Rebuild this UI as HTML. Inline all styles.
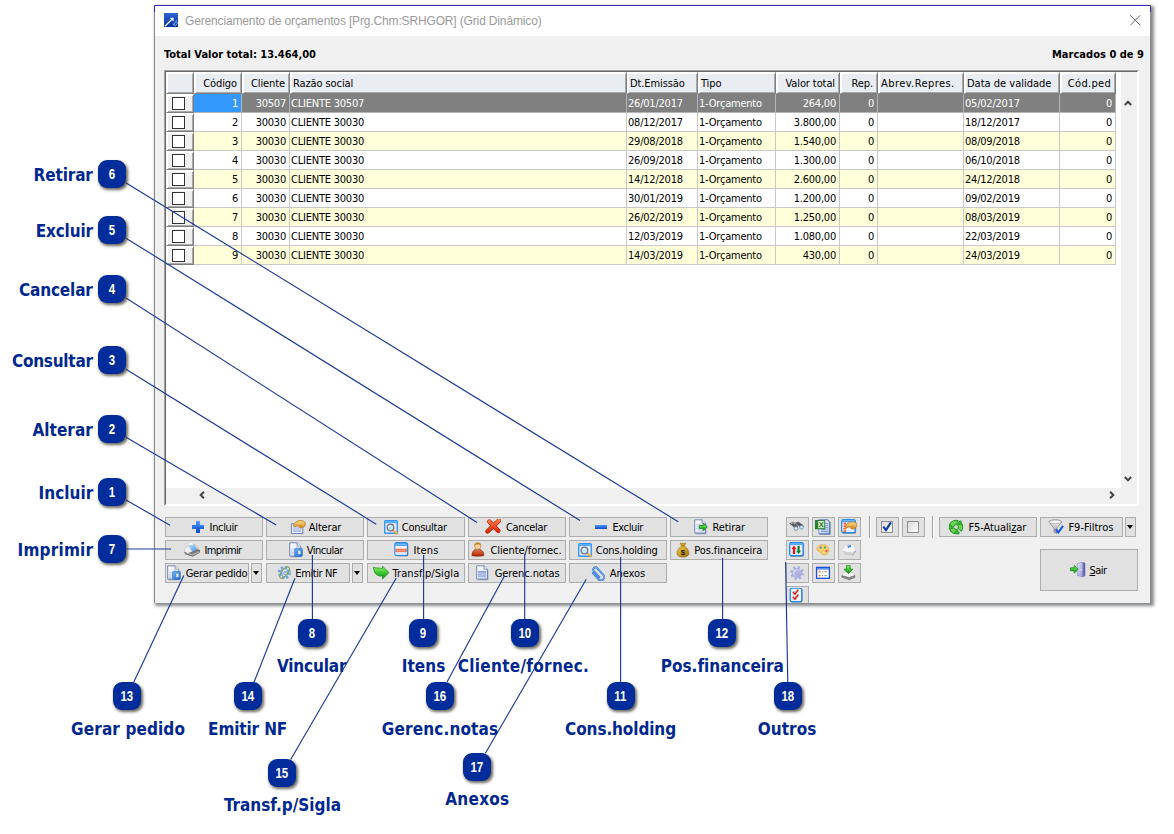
<!DOCTYPE html>
<html lang="pt-BR"><head><meta charset="utf-8"><title>Gerenciamento de orçamentos</title>
<style>
*{box-sizing:border-box}
html,body{margin:0;padding:0}
body{width:1174px;height:834px;position:relative;background:#fff;overflow:hidden;font:11px 'DejaVu Sans Condensed','Liberation Sans',sans-serif;color:#000}
.abs{position:absolute}
#win{position:absolute;left:154px;top:5px;width:997px;height:598px;background:#f0f0f0;border-top:1px solid #3328bc;border-left:1px solid #86888c;border-right:1px solid #86888c;box-shadow:2px 2px 3px 1px rgba(40,45,50,.55)}
#tbar{position:absolute;left:0;top:0;width:995px;height:30px;background:#fff}
#title{position:absolute;left:30px;top:7px;font:12px 'Liberation Sans',sans-serif;color:#9a9a9a;white-space:pre;line-height:16px}
.b11{font:bold 11px 'DejaVu Sans Condensed','Liberation Sans',sans-serif;white-space:pre;position:absolute;line-height:14px}
#grid{position:absolute;left:164px;top:70px;width:975px;height:436px;background:#fff;border:1px solid;border-color:#a0a0a0 #fff #fff #a0a0a0}
#gin{position:absolute;left:0;top:0;width:973px;height:434px;border:1px solid;border-color:#696969 #fff #fff #696969;overflow:hidden}
.hc{position:absolute;top:0;height:22px;background:#e9edf1;border:1px solid;border-color:#fff #7e7e7e #7e7e7e #fff;box-shadow:inset 1px 1px 0 #fff,inset -1px -1px 0 #a9a9a9;line-height:19px;white-space:pre;padding:1px 3px 0 2px;overflow:hidden;letter-spacing:-0.1px}
.hc.r{text-align:right;padding-right:4px}
.c{position:absolute;height:19px;line-height:20px;white-space:pre;padding:0 2px 0 1px;border-right:1px solid #c8c8c8;border-bottom:1px solid #c8c8c8;overflow:hidden}
.c.r{text-align:right;padding-right:3px}
.c.sel{background:#808080;color:#fff;border-color:#b4b4b4}
.c.cur{background:#3399ff;color:#fff}
.c.y{background:#ffffd9}
.cb{position:absolute;left:0;width:28px;height:19px;background:#f0f0f0;border:1px solid;border-color:#fff #7e7e7e #7e7e7e #fff;box-shadow:inset 1px 1px 0 #fff,inset -1px -1px 0 #a9a9a9}
.cb i{position:absolute;left:5px;top:2px;width:13px;height:13px;background:#fff;border:1px solid #333}
.sb{position:absolute;background:#f0f0f0}
.btn{position:absolute;height:20px;background:#e1e1e1;border:1px solid #adadad;display:flex;align-items:center;justify-content:center;white-space:pre;line-height:18px}
.btn svg{flex:none;display:block;position:absolute}
.btn span{display:block;position:absolute;line-height:18px}
.dd{position:absolute;width:11px;height:20px;background:#e1e1e1;border:1px solid #adadad}
.dd:after{content:"";position:absolute;left:1px;top:7px;border:3.5px solid transparent;border-top:4px solid #000;border-bottom:0}
.sep{position:absolute;width:2px;height:22px;border-left:1px solid #a0a0a0;border-right:1px solid #fff}
.badge{position:absolute;width:28px;height:28px;border-radius:9px;background:#002c9c;box-shadow:1.5px 2px 3px rgba(60,55,40,.75);color:#fff;font:bold 14px 'Liberation Sans',sans-serif;line-height:28px;text-align:center}
.badge span{display:inline-block;transform:scaleX(.82);transform-origin:50% 50%}
.lbl{position:absolute;font:bold 17px 'DejaVu Sans Condensed','Liberation Sans',sans-serif;color:#00288f;white-space:pre;line-height:22px}
u{text-decoration:underline;text-underline-offset:1px}
</style></head><body>

<svg width="0" height="0" style="position:absolute;left:0;top:0"><defs>
<linearGradient id="gBlue" x1="0" y1="0" x2="0" y2="1"><stop offset="0" stop-color="#4a98f8"/><stop offset="1" stop-color="#0a48c8"/></linearGradient>
<linearGradient id="gRed" x1="0" y1="0" x2="0" y2="1"><stop offset="0" stop-color="#ff7a4a"/><stop offset="1" stop-color="#d42a0a"/></linearGradient>
<linearGradient id="gGreen" x1="0" y1="0" x2="0" y2="1"><stop offset="0" stop-color="#7be452"/><stop offset="1" stop-color="#189a1c"/></linearGradient>
<linearGradient id="gPage" x1="0" y1="0" x2="1" y2="1"><stop offset="0" stop-color="#ffffff"/><stop offset="1" stop-color="#cfdcf2"/></linearGradient>
<linearGradient id="gGray" x1="0" y1="0" x2="0" y2="1"><stop offset="0" stop-color="#fafafa"/><stop offset="1" stop-color="#9c9c9c"/></linearGradient>
<linearGradient id="gGold" x1="0" y1="0" x2="1" y2="1"><stop offset="0" stop-color="#f6d24a"/><stop offset="1" stop-color="#a06c06"/></linearGradient>
<linearGradient id="gBody" x1="0" y1="0" x2="0" y2="1"><stop offset="0" stop-color="#f4743a"/><stop offset="1" stop-color="#a8260c"/></linearGradient>
<linearGradient id="gDoor" x1="0" y1="0" x2="1" y2="0"><stop offset="0" stop-color="#d6d6f6"/><stop offset="1" stop-color="#6a6ab8"/></linearGradient>
<linearGradient id="gApp" x1="0" y1="0" x2="0" y2="1"><stop offset="0" stop-color="#2f63d6"/><stop offset="1" stop-color="#06349a"/></linearGradient>
<linearGradient id="gBox" x1="0" y1="0" x2="1" y2="1"><stop offset="0" stop-color="#d8d8d8"/><stop offset="1" stop-color="#ffffff"/></linearGradient>
<linearGradient id="gWin" x1="0" y1="0" x2="0" y2="1"><stop offset="0" stop-color="#ffffff"/><stop offset="1" stop-color="#b9c9ea"/></linearGradient>
<linearGradient id="gPaper" x1="0" y1="0" x2="1" y2="1"><stop offset="0" stop-color="#b4dcff"/><stop offset="1" stop-color="#3d96ee"/></linearGradient>
<linearGradient id="gGreenH" x1="0" y1="0" x2="0" y2="1"><stop offset="0" stop-color="#9af06a"/><stop offset=".5" stop-color="#3cc832"/><stop offset="1" stop-color="#128a16"/></linearGradient>
<linearGradient id="gHand" x1="0" y1="0" x2="0" y2="1"><stop offset="0" stop-color="#fbd98a"/><stop offset="1" stop-color="#dc9524"/></linearGradient>
<linearGradient id="gXl" x1="0" y1="0" x2="1" y2="1"><stop offset="0" stop-color="#ffffff"/><stop offset="1" stop-color="#a9dc9c"/></linearGradient>
<linearGradient id="gXp" x1="0" y1="0" x2="1" y2="1"><stop offset="0" stop-color="#ffffff"/><stop offset="1" stop-color="#9db9e8"/></linearGradient>
<linearGradient id="gLav" x1="0" y1="0" x2="1" y2="1"><stop offset="0" stop-color="#e2e2fa"/><stop offset="1" stop-color="#9a9ad6"/></linearGradient>
<linearGradient id="gLock" x1="0" y1="0" x2="1" y2="1"><stop offset="0" stop-color="#6db6f6"/><stop offset="1" stop-color="#1b66d0"/></linearGradient>
</defs></svg>
<div id="win">
<div id="tbar">
<svg class="abs" style="left:9px;top:7px" width="14" height="14" viewBox="0 0 14 14"><rect width="14" height="14" fill="url(#gApp)"/><path d="M1 13.200L8.300 5.900" stroke="#fff" stroke-width="1.300"/><path d="M5.800 4.700h3.800v3.800z" fill="#fff"/><path d="M9.300 12.600l3.300-5.400M11.200 13l2.200-2.600M8.800 10.800l2.200 1.400M12 9l1.600 1" stroke="#8db4f2" stroke-width=".9" fill="none"/></svg>
<div id="title" style="letter-spacing:-0.149px;">Gerenciamento de orçamentos [Prg.Chm:SRHGOR] (Grid Dinâmico)</div>
<svg class="abs" style="left:975px;top:9px" width="11" height="11" viewBox="0 0 11 11"><path d="M0.3 0.3L10.2 10.2M10.2 0.3L0.3 10.2" stroke="#6a6a6a" stroke-width="1" fill="none"/></svg>
</div>
<i class="abs" style="left:-1px;top:0;width:1px;height:6px;background:#3328bc"></i><i class="abs" style="left:995px;top:0;width:1px;height:6px;background:#3328bc"></i>
</div>
<div class="b11" id="tot" style="left:164px;top:48px;letter-spacing:-0.001px;">Total Valor total: 13.464,00</div>
<div class="b11" id="marc" style="right:30px;top:48px;letter-spacing:0.024px;">Marcados 0 de 9</div>
<div id="grid"><div id="gin" style="letter-spacing:-0.22px;">
<div class="hc" style="left:0px;width:28px;"></div>
<div class="hc r" style="left:28px;width:48px;">Código</div>
<div class="hc r" style="left:76px;width:48px;">Cliente</div>
<div class="hc" style="left:124px;width:337px;">Razão social</div>
<div class="hc" style="left:461px;width:71px;">Dt.Emissão</div>
<div class="hc" style="left:532px;width:78px;">Tipo</div>
<div class="hc r" style="left:610px;width:64px;">Valor total</div>
<div class="hc r" style="left:674px;width:38px;">Rep.</div>
<div class="hc" style="left:712px;width:86px;letter-spacing:0.42px;">Abrev.Repres.</div>
<div class="hc" style="left:798px;width:96px;letter-spacing:0px;">Data de validade</div>
<div class="hc r" style="left:894px;width:56px;letter-spacing:0.3px;">Cód.ped</div>
<div class="cb" style="top:22px"><i></i></div>
<div class="c r sel cur" style="left:28px;top:22px;width:48px">1</div>
<div class="c r sel" style="left:76px;top:22px;width:48px">30507</div>
<div class="c sel" style="left:124px;top:22px;width:337px">CLIENTE 30507</div>
<div class="c sel" style="left:461px;top:22px;width:71px">26/01/2017</div>
<div class="c sel" style="left:532px;top:22px;width:78px">1-Orçamento</div>
<div class="c r sel" style="left:610px;top:22px;width:64px">264,00</div>
<div class="c r sel" style="left:674px;top:22px;width:38px">0</div>
<div class="c sel" style="left:712px;top:22px;width:86px"></div>
<div class="c sel" style="left:798px;top:22px;width:96px">05/02/2017</div>
<div class="c r sel" style="left:894px;top:22px;width:56px">0</div>
<div class="cb" style="top:41px"><i></i></div>
<div class="c r" style="left:28px;top:41px;width:48px">2</div>
<div class="c r" style="left:76px;top:41px;width:48px">30030</div>
<div class="c" style="left:124px;top:41px;width:337px">CLIENTE 30030</div>
<div class="c" style="left:461px;top:41px;width:71px">08/12/2017</div>
<div class="c" style="left:532px;top:41px;width:78px">1-Orçamento</div>
<div class="c r" style="left:610px;top:41px;width:64px">3.800,00</div>
<div class="c r" style="left:674px;top:41px;width:38px">0</div>
<div class="c" style="left:712px;top:41px;width:86px"></div>
<div class="c" style="left:798px;top:41px;width:96px">18/12/2017</div>
<div class="c r" style="left:894px;top:41px;width:56px">0</div>
<div class="cb" style="top:60px"><i></i></div>
<div class="c r y" style="left:28px;top:60px;width:48px">3</div>
<div class="c r y" style="left:76px;top:60px;width:48px">30030</div>
<div class="c y" style="left:124px;top:60px;width:337px">CLIENTE 30030</div>
<div class="c y" style="left:461px;top:60px;width:71px">29/08/2018</div>
<div class="c y" style="left:532px;top:60px;width:78px">1-Orçamento</div>
<div class="c r y" style="left:610px;top:60px;width:64px">1.540,00</div>
<div class="c r y" style="left:674px;top:60px;width:38px">0</div>
<div class="c y" style="left:712px;top:60px;width:86px"></div>
<div class="c y" style="left:798px;top:60px;width:96px">08/09/2018</div>
<div class="c r y" style="left:894px;top:60px;width:56px">0</div>
<div class="cb" style="top:79px"><i></i></div>
<div class="c r" style="left:28px;top:79px;width:48px">4</div>
<div class="c r" style="left:76px;top:79px;width:48px">30030</div>
<div class="c" style="left:124px;top:79px;width:337px">CLIENTE 30030</div>
<div class="c" style="left:461px;top:79px;width:71px">26/09/2018</div>
<div class="c" style="left:532px;top:79px;width:78px">1-Orçamento</div>
<div class="c r" style="left:610px;top:79px;width:64px">1.300,00</div>
<div class="c r" style="left:674px;top:79px;width:38px">0</div>
<div class="c" style="left:712px;top:79px;width:86px"></div>
<div class="c" style="left:798px;top:79px;width:96px">06/10/2018</div>
<div class="c r" style="left:894px;top:79px;width:56px">0</div>
<div class="cb" style="top:98px"><i></i></div>
<div class="c r y" style="left:28px;top:98px;width:48px">5</div>
<div class="c r y" style="left:76px;top:98px;width:48px">30030</div>
<div class="c y" style="left:124px;top:98px;width:337px">CLIENTE 30030</div>
<div class="c y" style="left:461px;top:98px;width:71px">14/12/2018</div>
<div class="c y" style="left:532px;top:98px;width:78px">1-Orçamento</div>
<div class="c r y" style="left:610px;top:98px;width:64px">2.600,00</div>
<div class="c r y" style="left:674px;top:98px;width:38px">0</div>
<div class="c y" style="left:712px;top:98px;width:86px"></div>
<div class="c y" style="left:798px;top:98px;width:96px">24/12/2018</div>
<div class="c r y" style="left:894px;top:98px;width:56px">0</div>
<div class="cb" style="top:117px"><i></i></div>
<div class="c r" style="left:28px;top:117px;width:48px">6</div>
<div class="c r" style="left:76px;top:117px;width:48px">30030</div>
<div class="c" style="left:124px;top:117px;width:337px">CLIENTE 30030</div>
<div class="c" style="left:461px;top:117px;width:71px">30/01/2019</div>
<div class="c" style="left:532px;top:117px;width:78px">1-Orçamento</div>
<div class="c r" style="left:610px;top:117px;width:64px">1.200,00</div>
<div class="c r" style="left:674px;top:117px;width:38px">0</div>
<div class="c" style="left:712px;top:117px;width:86px"></div>
<div class="c" style="left:798px;top:117px;width:96px">09/02/2019</div>
<div class="c r" style="left:894px;top:117px;width:56px">0</div>
<div class="cb" style="top:136px"><i></i></div>
<div class="c r y" style="left:28px;top:136px;width:48px">7</div>
<div class="c r y" style="left:76px;top:136px;width:48px">30030</div>
<div class="c y" style="left:124px;top:136px;width:337px">CLIENTE 30030</div>
<div class="c y" style="left:461px;top:136px;width:71px">26/02/2019</div>
<div class="c y" style="left:532px;top:136px;width:78px">1-Orçamento</div>
<div class="c r y" style="left:610px;top:136px;width:64px">1.250,00</div>
<div class="c r y" style="left:674px;top:136px;width:38px">0</div>
<div class="c y" style="left:712px;top:136px;width:86px"></div>
<div class="c y" style="left:798px;top:136px;width:96px">08/03/2019</div>
<div class="c r y" style="left:894px;top:136px;width:56px">0</div>
<div class="cb" style="top:155px"><i></i></div>
<div class="c r" style="left:28px;top:155px;width:48px">8</div>
<div class="c r" style="left:76px;top:155px;width:48px">30030</div>
<div class="c" style="left:124px;top:155px;width:337px">CLIENTE 30030</div>
<div class="c" style="left:461px;top:155px;width:71px">12/03/2019</div>
<div class="c" style="left:532px;top:155px;width:78px">1-Orçamento</div>
<div class="c r" style="left:610px;top:155px;width:64px">1.080,00</div>
<div class="c r" style="left:674px;top:155px;width:38px">0</div>
<div class="c" style="left:712px;top:155px;width:86px"></div>
<div class="c" style="left:798px;top:155px;width:96px">22/03/2019</div>
<div class="c r" style="left:894px;top:155px;width:56px">0</div>
<div class="cb" style="top:174px"><i></i></div>
<div class="c r y" style="left:28px;top:174px;width:48px">9</div>
<div class="c r y" style="left:76px;top:174px;width:48px">30030</div>
<div class="c y" style="left:124px;top:174px;width:337px">CLIENTE 30030</div>
<div class="c y" style="left:461px;top:174px;width:71px">14/03/2019</div>
<div class="c y" style="left:532px;top:174px;width:78px">1-Orçamento</div>
<div class="c r y" style="left:610px;top:174px;width:64px">430,00</div>
<div class="c r y" style="left:674px;top:174px;width:38px">0</div>
<div class="c y" style="left:712px;top:174px;width:86px"></div>
<div class="c y" style="left:798px;top:174px;width:96px">24/03/2019</div>
<div class="c r y" style="left:894px;top:174px;width:56px">0</div>
<div class="sb" style="left:955px;top:0;width:16px;height:432px"></div>
<div class="sb" style="left:0;top:416px;width:971px;height:16px"></div>
<svg class="abs" style="left:957.3px;top:25.799999999999997px" width="10" height="10" viewBox="-5 -5 10 10"><path d="M-3.2 1.9L0 -1.3L3.2 1.9" stroke="#484848" stroke-width="2.1" fill="none"/></svg>
<svg class="abs" style="left:957.3px;top:401.7px" width="10" height="10" viewBox="-5 -5 10 10"><path d="M-3.2 -1.9L0 1.3L3.2 -1.9" stroke="#484848" stroke-width="2.1" fill="none"/></svg>
<svg class="abs" style="left:31.30000000000001px;top:418.3px" width="10" height="10" viewBox="-5 -5 10 10"><path d="M1.9 -3.2L-1.3 0L1.9 3.2" stroke="#484848" stroke-width="2.1" fill="none"/></svg>
<svg class="abs" style="left:940.7px;top:418.3px" width="10" height="10" viewBox="-5 -5 10 10"><path d="M-1.9 -3.2L1.3 0L-1.9 3.2" stroke="#484848" stroke-width="2.1" fill="none"/></svg>
</div></div>
<div class="btn" style="left:165px;top:517px;width:98px;height:20px"><svg style="left:24px;top:1px" width="16" height="16" viewBox="0 0 16 16"><path d="M6 2h4v4h4v4h-4v4H6v-4H2V6h4z" fill="url(#gBlue)"/><path d="M6.300 2.300h3.400v4h4" fill="none" stroke="#6fb0ff" stroke-width=".6" opacity=".8"/></svg><span style="left:43.6px;top:1px;letter-spacing:-0.355px;">Incluir</span></div>
<div class="btn" style="left:266px;top:517px;width:98px;height:20px"><svg style="left:23px;top:1px" width="16" height="16" viewBox="0 0 16 16"><rect x="1.400" y="4.800" width="11.400" height="9.700" fill="#fff" stroke="#6f80ba" stroke-width="1"/><rect x="2.700" y="7" width="8.800" height="6.200" fill="url(#gWin)"/><rect x="2.700" y="7" width="8.800" height="6.200" fill="#a9b7e4" opacity=".55"/><g transform="translate(1.300 .9) scale(.9)"><path d="M2.400 5.600C3.600 3.400 6 1 9.600.700c3.200-.2 5.800 1 6 3.300.2 2.600-1.800 4.400-4.200 4.800-1.400.2-2.600-.3-3.400-1.200L6.600 6.400l-3 1.100C2.600 7.500 1.900 6.500 2.400 5.600z" fill="url(#gHand)" stroke="#a86c14" stroke-width=".8" stroke-linejoin="round"/><path d="M8.400 7.200c.6-1 1.600-1.600 2.800-1.600M10 8.300c.6-.8 1.400-1.300 2.400-1.300" stroke="#b87a1c" stroke-width=".7" fill="none"/></g></svg><span style="left:41.7px;top:1px;letter-spacing:-0.155px;">Alterar</span></div>
<div class="btn" style="left:367px;top:517px;width:98px;height:20px"><svg style="left:15px;top:1px" width="16" height="16" viewBox="0 0 16 16"><rect x="1.7" y="1.7" width="12.6" height="12.6" rx="1" fill="#ebebfb" stroke="#2f97ff" stroke-width="1.4"/><rect x="2" y="2" width="12" height="2.2" fill="#59aeff"/><line x1="10.200" y1="11.200" x2="13.600" y2="14.300" stroke="#f39a2e" stroke-width="2.400" stroke-linecap="round"/><line x1="10.600" y1="11.200" x2="13.400" y2="13.800" stroke="#ffe2a8" stroke-width=".8"/><circle cx="7.500" cy="8.500" r="3.300" fill="#bfe6fb" stroke="#737981" stroke-width="1.300"/><path d="M5.8 7.6a2 2 0 0 1 2-1" stroke="#fff" stroke-width=".9" fill="none"/></svg><span style="left:33.8px;top:1px;letter-spacing:-0.271px;">Consultar</span></div>
<div class="btn" style="left:468px;top:517px;width:98px;height:20px"><svg style="left:16px;top:1px" width="16" height="16" viewBox="0 0 16 16"><path d="M14.100 1.300L2.600 12.400M4.400 2.600l8.800 9.200" stroke="#b82206" stroke-width="4.500" stroke-linecap="round"/><path d="M14.100 1.300L2.600 12.400M4.400 2.600l8.800 9.200" stroke="url(#gRed)" stroke-width="3.300" stroke-linecap="round"/></svg><span style="left:36.9px;top:1px;letter-spacing:-0.334px;">Cancelar</span></div>
<div class="btn" style="left:569px;top:517px;width:98px;height:20px"><svg style="left:23px;top:1px" width="16" height="16" viewBox="0 0 16 16"><rect x="2" y="6" width="12" height="4" fill="url(#gBlue)"/></svg><span style="left:42.4px;top:1px;letter-spacing:-0.372px;">Excluir</span></div>
<div class="btn" style="left:670px;top:517px;width:98px;height:20px"><svg style="left:22px;top:1px" width="16" height="16" viewBox="0 0 16 16"><path d="M2.6 1.700h7.200l3.600 3.400v10.100H2.600z" fill="#5a6a92" opacity=".55"/><path d="M1.700.800h7.400l3.400 3.400v9.900H1.700z" fill="url(#gPage)" stroke="#7486b6" stroke-width="1"/><path d="M9.100.800v3.400h3.400" fill="#f4f7fd" stroke="#7486b6" stroke-width=".9"/><path d="M3.200 5.400h4M3.200 7.400h2.600M3.200 9.400h2.600v2.400h4" stroke="#c2c9ea" stroke-width=".9" fill="none"/><path d="M6.300 6.500h3.900V4.300l4.100 3.700-4.100 3.700V9.500H6.300z" fill="url(#gGreenH)" stroke="#0c820e" stroke-width=".8" stroke-linejoin="round"/></svg><span style="left:41.5px;top:1px;letter-spacing:-0.114px;">Retirar</span></div>
<div class="btn" style="left:165px;top:540px;width:98px;height:20px"><svg style="left:18px;top:1px" width="16" height="16" viewBox="0 0 16 16"><path d="M3 1L8.200.400l2 2.600-5.200 1z" fill="#f6faff" stroke="#b9c6dc" stroke-width=".5"/><path d="M.9 6.400l3.700-3L8.200 9.800l-4.600 2L.9 10.200z" fill="#f1f1f1" stroke="#b0b0b0" stroke-width=".5" stroke-linejoin="round"/><path d="M9.600 2.500l2.600 1.100 3.300 4.700-1.900-.2z" fill="#dedede" stroke="#a8a8a8" stroke-width=".4"/><path d="M4.800 3.500l4.800-1 4 5.500-5.200 2.100z" fill="url(#gPaper)"/><path d="M.9 10.100l2.700 1.700 4.800-1.800 5.200-2 1.900.3v2.100L8.700 14.300 1.100 11.700z" fill="#868686" stroke="#545454" stroke-width=".7" stroke-linejoin="round"/><path d="M1.400 10.700l7.200 2.300 6.600-2.900" stroke="#c9c9c9" stroke-width=".7" fill="none"/><circle cx="13.500" cy="6.700" r=".75" fill="#f6a02a"/></svg><span style="left:38.5px;top:1px;letter-spacing:-0.641px;">Imprimir</span></div>
<div class="btn" style="left:266px;top:540px;width:98px;height:20px"><svg style="left:21px;top:1px" width="16" height="16" viewBox="0 0 16 16"><path d="M2.6 1.700h7.200l3.600 3.400v10.100H2.600z" fill="#5a6a92" opacity=".55"/><path d="M1.700.800h7.400l3.400 3.400v9.900H1.700z" fill="url(#gPage)" stroke="#7486b6" stroke-width="1"/><path d="M9.100.800v3.400h3.400" fill="#f4f7fd" stroke="#7486b6" stroke-width=".9"/><rect x="3.200" y="6.800" width="3.600" height="6" fill="#c5caef"/><path d="M3.200 9h3.600M5 6.800v6" stroke="#fff" stroke-width=".6"/><path d="M9 6.400V5.300a1.500 1.500 0 0 1 3 0v1.100" fill="none" stroke="#c9ccd4" stroke-width="1.200"/><path d="M7.400 6.400h6.200c.5 0 .8.300.8.800v6.400c0 .5-.3.800-.8.800H7.400c-.5 0-.8-.3-.8-.8V7.200c0-.5.300-.8.800-.8z" fill="url(#gLock)" stroke="#2a6cc4" stroke-width=".6"/><rect x="10.300" y="8.600" width="2.200" height="3.600" fill="#f6ead2"/></svg><span style="left:39.8px;top:1px;letter-spacing:-0.520px;">Vincular</span></div>
<div class="btn" style="left:367px;top:540px;width:98px;height:20px"><svg style="left:25px;top:1px" width="16" height="16" viewBox="0 0 16 16"><rect x="2.500" y="1.300" width="12.800" height="13" rx="1.600" fill="#3a3e4c" opacity=".75"/><rect x="1.900" y=".700" width="12.400" height="12.600" rx="1.500" fill="#fff" stroke="#1f8cf6" stroke-width="1.300"/><rect x="2.400" y="1.200" width="11.400" height="2.600" fill="#2f8ef2"/><rect x="2.600" y="1.900" width="11" height=".8" fill="#8cc6ff"/><rect x="2.600" y="4" width="11" height="2.600" fill="#ecebfb"/><rect x="2.600" y="6.800" width="11" height="3" fill="#ff4a1c"/><rect x="2.600" y="10" width="11" height="2.800" fill="#d8d8f6"/><path d="M4.700 4v8.800M6.900 4v8.800M9.100 4v8.800M11.300 4v8.800M2.600 5.300h11M2.600 8.300h11M2.600 11.400h11" stroke="#fff" stroke-width=".5" opacity=".7"/></svg><span style="left:45.5px;top:1px;letter-spacing:0.134px;">Itens</span></div>
<div class="btn" style="left:468px;top:540px;width:98px;height:20px"><svg style="left:1px;top:1px" width="16" height="16" viewBox="0 0 16 16"><path d="M2 13.700c-.2-3.600 1.600-6.600 5.800-6.600s6.200 3 6 6.600c-3 .6-9 .6-11.800 0z" fill="url(#gBody)" stroke="#8a200a" stroke-width=".6"/><path d="M6.200 7.400l1.500 1.900 1.500-1.900" fill="#9aa4c0" stroke="#5f6a8a" stroke-width=".4"/><circle cx="7.700" cy="4" r="3.300" fill="#f8cf9a" stroke="#b27a34" stroke-width=".6"/><path d="M4.400 3.800C4.500 1.600 6 .4 7.700.4s3.200 1.200 3.300 3.200C10 2.800 9 2.500 7.700 2.500S5.400 3 4.400 3.800z" fill="#c08a26"/></svg><span style="left:21.5px;top:1px;letter-spacing:-0.096px;">Cliente/fornec.</span></div>
<div class="btn" style="left:569px;top:540px;width:98px;height:20px"><svg style="left:7px;top:1px" width="16" height="16" viewBox="0 0 16 16"><rect x="1.7" y="1.7" width="12.6" height="12.6" rx="1" fill="#ebebfb" stroke="#2f97ff" stroke-width="1.4"/><rect x="2" y="2" width="12" height="2.2" fill="#59aeff"/><line x1="10.200" y1="11.200" x2="13.600" y2="14.300" stroke="#f39a2e" stroke-width="2.400" stroke-linecap="round"/><line x1="10.600" y1="11.200" x2="13.400" y2="13.800" stroke="#ffe2a8" stroke-width=".8"/><circle cx="7.500" cy="8.500" r="3.300" fill="#bfe6fb" stroke="#737981" stroke-width="1.300"/><path d="M5.8 7.6a2 2 0 0 1 2-1" stroke="#fff" stroke-width=".9" fill="none"/></svg><span style="left:25.7px;top:1px;letter-spacing:-0.185px;">Cons.holding</span></div>
<div class="btn" style="left:670px;top:540px;width:98px;height:20px"><svg style="left:4px;top:1px" width="16" height="16" viewBox="0 0 16 16"><path d="M5.400 1.100c.8.500 1.600.2 2.400-.1.900.3 1.900.7 3 .1-.3 1.300-1 2.200-1.600 2.900H6.800C6.200 3.300 5.500 2.300 5.400 1.100z" fill="#d9a21c" stroke="#8a5e06" stroke-width=".5"/><path d="M6.800 4h2.400c2.900 1.500 4.700 4.600 4.700 7.300 0 2.500-2.300 3.700-6 3.700s-5.900-1.200-5.900-3.700C2 8.600 3.900 5.500 6.800 4z" fill="url(#gGold)" stroke="#8a5e06" stroke-width=".6"/><text x="7.900" y="12.900" font-family="Liberation Sans,sans-serif" font-weight="bold" font-size="7.600" fill="#1c1404" text-anchor="middle">$</text></svg><span style="left:23.2px;top:1px;letter-spacing:-0.085px;">Pos.financeira</span></div>
<div class="dd" style="left:251px;top:563px"></div>
<div class="btn" style="left:165px;top:563px;width:84px;height:20px"><svg style="left:0px;top:1px" width="16" height="16" viewBox="0 0 16 16"><path d="M2.6 1.700h7.200l3.600 3.400v10.100H2.600z" fill="#5a6a92" opacity=".55"/><path d="M1.700.800h7.400l3.400 3.400v9.900H1.700z" fill="url(#gPage)" stroke="#7486b6" stroke-width="1"/><path d="M9.100.800v3.400h3.400" fill="#f4f7fd" stroke="#7486b6" stroke-width=".9"/><rect x="3.200" y="6.800" width="3.600" height="6" fill="#c5caef"/><path d="M3.200 9h3.600M5 6.800v6" stroke="#fff" stroke-width=".6"/><path d="M9 6.400V5.300a1.500 1.500 0 0 1 3 0v1.100" fill="none" stroke="#c9ccd4" stroke-width="1.200"/><path d="M7.400 6.400h6.200c.5 0 .8.300.8.800v6.400c0 .5-.3.800-.8.800H7.400c-.5 0-.8-.3-.8-.8V7.200c0-.5.300-.8.800-.8z" fill="url(#gLock)" stroke="#2a6cc4" stroke-width=".6"/><rect x="10.300" y="8.600" width="2.200" height="3.600" fill="#f6ead2"/></svg><span style="left:19.7px;top:1px;letter-spacing:-0.272px;">Gerar pedido</span></div>
<div class="dd" style="left:352px;top:563px"></div>
<div class="btn" style="left:266px;top:563px;width:84px;height:20px"><svg style="left:10px;top:1px" width="16" height="16" viewBox="0 0 16 16"><g opacity=".85"><circle cx="7.400" cy="7.600" r="5" fill="none" stroke="#5a9ce8" stroke-width="3.200" stroke-dasharray="2.300 1.600"/><circle cx="7.400" cy="7.600" r="4.300" fill="#5f9fe6"/><path d="M5 4.600l4.400-.4 1 6.200-4.400.8z" fill="#f4f8fd" stroke="#9db8dc" stroke-width=".4"/><text x="7.700" y="9.900" font-family="Liberation Sans,sans-serif" font-style="italic" font-weight="bold" font-size="6.400" fill="#5a86c6" text-anchor="middle">e</text><ellipse cx="7.600" cy="7.600" rx="6.800" ry="2.900" transform="rotate(-52 7.600 7.600)" fill="none" stroke="#6f9a3a" stroke-width="1"/></g></svg><span style="left:28.3px;top:1px;letter-spacing:-0.398px;">Emitir NF</span></div>
<div class="btn" style="left:367px;top:563px;width:98px;height:20px"><svg style="left:5px;top:1px" width="16" height="16" viewBox="0 0 16 16"><path d="M.3 2.300c3 .9 6 .7 9.200 1.100V1.200L16 7.600 9.500 14v-3c-3.800.5-6.600-.9-8-3.900C.8 5.600.6 4 .3 2.300z" fill="url(#gGreenH)" stroke="#138a16" stroke-width=".7" stroke-linejoin="round"/></svg><span style="left:24.5px;top:1px;letter-spacing:0.088px;">Transf.p/Sigla</span></div>
<div class="btn" style="left:468px;top:563px;width:98px;height:20px"><svg style="left:6px;top:1px" width="16" height="16" viewBox="0 0 16 16"><path d="M2.6 1.700h7.200l3.600 3.400v10.100H2.600z" fill="#5a6a92" opacity=".55"/><path d="M1.700.800h7.400l3.400 3.400v9.900H1.700z" fill="url(#gPage)" stroke="#7486b6" stroke-width="1"/><path d="M9.100.800v3.400h3.400" fill="#f4f7fd" stroke="#7486b6" stroke-width=".9"/><rect x="3" y="6.200" width="8.200" height="6" fill="url(#gWin)"/><rect x="3" y="6.200" width="8.200" height="6" fill="#98a8dc" opacity=".6"/><rect x="3" y="6.200" width="8.200" height="1.200" fill="#7f92d2"/></svg><span style="left:25.7px;top:1px;letter-spacing:-0.081px;">Gerenc.notas</span></div>
<div class="btn" style="left:569px;top:563px;width:98px;height:20px"><svg style="left:20px;top:1px" width="16" height="16" viewBox="0 0 16 16"><g transform="rotate(-42 8 8)" fill="none" stroke-linecap="round"><path d="M6.200 12V3.800a2.200 2.200 0 0 1 4.400 0V13a3.200 3.200 0 0 1-6.400 0V4.400" stroke="#2a70d0" stroke-width="1.900"/><path d="M6.200 12V3.800a2.200 2.200 0 0 1 4.400 0V13a3.200 3.200 0 0 1-6.400 0V4.400" stroke="#8cc0f8" stroke-width=".8"/></g></svg><span style="left:39.8px;top:1px;letter-spacing:-0.045px;">Anexos</span></div>
<div class="btn" style="left:786px;top:517px;width:23px;height:20px;"><svg style="left:2px;top:1px" width="16" height="16" viewBox="0 0 16 16"><path d="M.8 4.600l3.600-1.600 4.400 4-1.200 3.200zM6.600 4l2.800-1 4.800 3.600-1 2.800z" fill="#585c62" stroke="#3a3e44" stroke-width=".5" stroke-linejoin="round"/><path d="M2 4.700l2.300-1 1.700 1.500" stroke="#d8dade" stroke-width=".7" fill="none"/><circle cx="7" cy="9.500" r="2" fill="#c4e3fb" stroke="#6c8098" stroke-width=".7"/><circle cx="12.500" cy="8.300" r="1.900" fill="#c4e3fb" stroke="#6c8098" stroke-width=".7"/></svg></div>
<div class="btn" style="left:812px;top:517px;width:23px;height:20px;"><svg style="left:2px;top:1px" width="16" height="16" viewBox="0 0 16 16"><path d="M4.400.600h8.200L15.400 3.400v12H4.400z" fill="#2f4a7e"/><path d="M3.800.400h8l2.800 2.800v11.600H3.800z" fill="url(#gXp)" stroke="#5a76ae" stroke-width=".6"/><path d="M6 10.300h4.400M6 12.300h6.600M10.400 4.600h2.400M10.400 6.600h2.400M10.400 8.600h2.400" stroke="#6f92d6" stroke-width=".9"/><rect x=".3" y="1.300" width="9.600" height="8.600" fill="#23862e" stroke="#14661f" stroke-width=".6"/><rect x="3.300" y="2" width="6" height="7.200" fill="url(#gXl)"/><text x="6.300" y="8.400" font-family="Liberation Sans,sans-serif" font-weight="bold" font-size="7.400" fill="#1c7a28" text-anchor="middle">X</text></svg></div>
<div class="btn" style="left:838px;top:517px;width:23px;height:20px;"><svg style="left:2px;top:1px" width="16" height="16" viewBox="0 0 16 16"><rect x=".9" y="1" width="14.200" height="13.800" rx="1.700" fill="#3e4250" opacity=".6"/><rect x=".7" y=".700" width="13.400" height="13" rx="1.600" fill="#e9e9fb" stroke="#1f8cf6" stroke-width="1.300"/><rect x="1.300" y="1.300" width="12.200" height="2" fill="#4ea6ff"/><rect x="2.500" y="3.600" width="3" height="9.400" fill="#ff6a34"/><path d="M5.600 3.600v9.400M8.300 3.600v9.400M11 3.600v9.400M1.400 6h12M1.400 8.400h12M1.400 10.800h12" stroke="#fff" stroke-width=".6"/><g transform="translate(2.300 2.200) scale(.88)"><path d="M2.400 5.600C3.600 3.400 6 1 9.600.700c3.200-.2 5.800 1 6 3.300.2 2.600-1.800 4.400-4.200 4.800-1.400.2-2.600-.3-3.400-1.200L6.600 6.400l-3 1.100C2.600 7.500 1.900 6.500 2.400 5.600z" fill="url(#gHand)" stroke="#a86c14" stroke-width=".8" stroke-linejoin="round"/><path d="M8.400 7.200c.6-1 1.600-1.600 2.800-1.600M10 8.300c.6-.8 1.400-1.300 2.400-1.300" stroke="#b87a1c" stroke-width=".7" fill="none"/></g></svg></div>
<div class="btn" style="left:786px;top:540px;width:23px;height:20px;"><svg style="left:2px;top:1px" width="16" height="16" viewBox="0 0 16 16"><rect x=".9" y=".8" width="14.200" height="14" rx="1.700" fill="#3e4250" opacity=".6"/><rect x=".7" y=".500" width="13.400" height="13.200" rx="1.600" fill="#ebe9fc" stroke="#1f8cf6" stroke-width="1.300"/><rect x="1.300" y="1.100" width="12.200" height="1.900" fill="#57abff"/><path d="M5 3.600L7.400 6.900H6.100v5H3.900v-5H2.600z" fill="#f60d0d"/><path d="M9.600 12.100L7.200 8.800h1.300V3.700h2.200v5.100H12z" fill="#0b7f25"/></svg></div>
<div class="btn" style="left:812px;top:540px;width:23px;height:20px;"><svg style="left:2px;top:1px" width="16" height="16" viewBox="0 0 16 16"><path d="M7.600 2.700c-3.200 0-5.600 2-5.600 4.300 0 1.400 1 2.200 2.200 2.600 1.200.5 1.600 1.200 2.200 2.200.6 1 1.800 1.300 3.400 1.100 2.600-.4 4.400-2.600 4.200-5.300-.2-2.900-2.800-4.900-6.400-4.900z" fill="#f4cc6a" stroke="#d6a642" stroke-width=".6"/><circle cx="5.600" cy="5.500" r="1.100" fill="#3f86f2"/><circle cx="9.900" cy="5.400" r="1.100" fill="#2fbf50"/><ellipse cx="11.500" cy="9" rx="1.200" ry=".9" fill="#f0426a"/><circle cx="8.500" cy="10.800" r=".8" fill="#f6dd94"/></svg></div>
<div class="btn" style="left:838px;top:540px;width:23px;height:20px;"><svg style="left:2px;top:1px" width="16" height="16" viewBox="0 0 16 16"><path d="M1 8.600l3.600-5.400 7.200-1 3.200 6-3.800 4.600-6.600-.8z" fill="#f7f7f7" stroke="#c9c9c9" stroke-width=".5" stroke-linejoin="round"/><path d="M1 8.600l3.600 4.200 6.600.8L15 8.200l-3.600 2.200-6.800-.8z" fill="#cfcfcf"/><path d="M11.200 13.600L15 8.200v1.400l-3.600 4.400z" fill="#9a9a9a"/><path d="M6.200 3.700l3.800-.7.400 2.400-2.200-.4-.9 1.400z" fill="#3f86ea"/></svg></div>
<div class="btn" style="left:786px;top:563px;width:23px;height:20px;"><svg style="left:2px;top:1px" width="16" height="16" viewBox="0 0 16 16"><circle cx="8" cy="8" r="5.300" fill="none" stroke="#aeaee4" stroke-width="3.400" stroke-dasharray="2.080 2.080"/><circle cx="8" cy="8" r="4.600" fill="url(#gLav)" stroke="#a0a0dc" stroke-width=".6"/><circle cx="8" cy="8" r="1.300" fill="#ececf4" stroke="#8a8ac8" stroke-width=".8"/></svg></div>
<div class="btn" style="left:812px;top:563px;width:23px;height:20px;"><svg style="left:2px;top:1px" width="16" height="16" viewBox="0 0 16 16"><rect x="1.600" y="2.400" width="12.800" height="10.900" fill="#fff" stroke="#1a50d8" stroke-width="1.300"/><rect x="2.200" y="3" width="11.600" height="1.700" fill="#5d8ef2"/><circle cx="4.600" cy="6.700" r="1.150" fill="#f8922a"/><circle cx="4.600" cy="10.600" r="1.150" fill="#f8922a"/><path d="M6.900 6.700h1.300M9.200 6.700h3M6.900 10.600h1.300M9.200 10.600h3" stroke="#8d8d9d" stroke-width=".9"/></svg></div>
<div class="btn" style="left:838px;top:563px;width:23px;height:20px;"><svg style="left:2px;top:1px" width="16" height="16" viewBox="0 0 16 16"><path d="M.9 10.600l3-3.600h6.800l3.200 3.400-5.600 4.400z" fill="#f4f4f4" stroke="#b9b9b9" stroke-width=".5" stroke-linejoin="round"/><path d="M.9 10.600l7.400 2 5.600-2.200v2L8.300 14.800.9 12.300z" fill="#8a8a8a" stroke="#5c5c5c" stroke-width=".5" stroke-linejoin="round"/><path d="M5.600.300h3.600v3.900h2.600L7.400 8.600 3 4.200h2.600z" fill="url(#gGreenH)" stroke="#0c820e" stroke-width=".7" stroke-linejoin="round"/></svg></div>
<div class="btn" style="left:786px;top:586px;width:23px;height:17px;border-bottom:0;"><svg style="left:2px;top:1px" width="16" height="16" viewBox="0 0 16 16"><rect x="1.500" y=".500" width="12" height="14" rx="1.600" fill="#3e4250" opacity=".55"/><rect x="1.300" y=".200" width="11.400" height="13.400" rx="1.500" fill="#f7f3ee" stroke="#1f8cf6" stroke-width="1.300"/><rect x="4" y="3.600" width="3.600" height="3.200" fill="#fff" stroke="#a9a9b9" stroke-width=".5"/><rect x="4" y="8.600" width="3.600" height="3.200" fill="#fff" stroke="#a9a9b9" stroke-width=".5"/><path d="M3.900 3.900l2 2.300 3.400-4.600M3.900 8.900l2 2.300 3.400-4.600" stroke="#e01212" stroke-width="1.400" fill="none"/></svg></div>
<div class="sep" style="left:869px;top:516px"></div>
<div class="btn" style="left:876px;top:517px;width:23px"><svg style="left:4px;top:3px" width="12" height="12" viewBox="0 0 12 12"><rect x=".5" y=".5" width="11" height="11" fill="url(#gBox)" stroke="#8e8e8e" stroke-width="1"/><path d="M2.300 5.600l2.700 3.500 4.900-7.700" stroke="#0a3aa8" stroke-width="2.100" fill="none"/></svg></div>
<div class="btn" style="left:902px;top:517px;width:23px"><svg style="left:4px;top:3px" width="12" height="12" viewBox="0 0 12 12"><rect x=".5" y=".5" width="11" height="11" fill="url(#gBox)" stroke="#8e8e8e" stroke-width="1"/></svg></div>
<div class="sep" style="left:932px;top:516px"></div>
<div class="btn" style="left:939px;top:517px;width:98px;height:20px"><svg style="left:8px;top:1px" width="16" height="16" viewBox="0 0 16 16"><circle cx="8" cy="8" r="4.500" fill="none" stroke="#1f8a22" stroke-width="5.400" stroke-dasharray="8.300 1.120" transform="rotate(-66 8 8)"/><circle cx="8" cy="8" r="4.500" fill="none" stroke="#6ad650" stroke-width="3.600" stroke-dasharray="7.300 2.120" transform="rotate(-62 8 8)"/><path d="M12.900 1.300l.9 4.700-4.500-1zM.9 9.900l1.500-4.500 3.100 3.500zM10.600 15.200l-4.700-1 3.200-3.300z" fill="#35b734" stroke="#1f8a22" stroke-width=".5"/><circle cx="8" cy="8" r="1.100" fill="#d8d8d8"/></svg><span style="left:28.5px;top:1px;letter-spacing:-0.103px;">F5-Atuali<u>z</u>ar</span></div>
<div class="btn" style="left:1040px;top:517px;width:83px;height:20px"><svg style="left:7px;top:1px" width="16" height="16" viewBox="0 0 16 16"><path d="M.9 3c0-1.300 2.800-2.200 6.400-2.200s6.400.9 6.400 2.200L8.700 9.200v5.200L5.900 13V9.200z" fill="url(#gGray)" stroke="#7c7c7c" stroke-width=".7" stroke-linejoin="round"/><ellipse cx="7.300" cy="2.900" rx="5.900" ry="1.700" fill="#f7f7f7" stroke="#a5a5a5" stroke-width=".6"/><path d="M7.800 10.200l2.500 3.300L15 6.900" stroke="#1657e0" stroke-width="2.100" fill="none"/></svg><span style="left:27.4px;top:1px;letter-spacing:0.013px;">F9-Filtros</span></div>
<div class="dd" style="left:1125px;top:517px"></div>
<div class="btn" style="left:1040px;top:549px;width:98px;height:42px"><svg style="left:29px;top:12px" width="16" height="16" viewBox="0 0 16 16"><path d="M7.300 1.700L12.600.2l2.400 1v12.500l-2.400 1-5.300-1.500z" fill="#6c6cb4" stroke="#4f4f98" stroke-width=".5" stroke-linejoin="round"/><path d="M7.300 1.700L12.600.2v14.500l-5.300-1.500z" fill="url(#gLav)"/><circle cx="11.400" cy="7.700" r=".7" fill="#f0f0fc"/><path d="M.5 5.800h3.700V3.300L8.200 7.200 4.200 11.100V8.700H.5z" fill="url(#gGreenH)" stroke="#0c820e" stroke-width=".7" stroke-linejoin="round"/></svg><span style="left:48.5px;top:12px;letter-spacing:-0.543px;"><u>S</u>air</span></div>
<svg class="abs" style="left:0;top:0" width="1174" height="834" viewBox="0 0 1174 834"><g stroke="#1b3a98" stroke-width="1.15" fill="none">
<line x1="126" y1="500" x2="170" y2="525.2"/>
<line x1="126" y1="437.2" x2="276.2" y2="525"/>
<line x1="126" y1="369.2" x2="376.2" y2="524.2"/>
<line x1="126" y1="298" x2="477" y2="522.5"/>
<line x1="126" y1="238.2" x2="580" y2="520.5"/>
<line x1="125.8" y1="182.7" x2="678.25" y2="521.75"/>
<line x1="126" y1="549" x2="171" y2="549"/>
<line x1="312.4" y1="555" x2="312.4" y2="619"/>
<line x1="423.6" y1="555" x2="423.6" y2="619"/>
<line x1="524.7" y1="554" x2="524.7" y2="619"/>
<line x1="620.6" y1="557" x2="620.6" y2="682"/>
<line x1="722.6" y1="558" x2="722.6" y2="619"/>
<line x1="183.8" y1="575.4" x2="133.7" y2="682.2"/>
<line x1="294.9" y1="578.2" x2="254" y2="682.2"/>
<line x1="396.25" y1="578" x2="290.7" y2="759.5"/>
<line x1="504.5" y1="575.75" x2="447" y2="682"/>
<line x1="586.25" y1="579.25" x2="485.4" y2="753.3"/>
<line x1="785.6" y1="562" x2="787.8" y2="682"/>
</g></svg>
<div class="badge" style="left:98px;top:160px"><span>6</span></div>
<div class="lbl" style="left:33.6px;top:163.7px;letter-spacing:-0.132px;">Retirar</div>
<div class="badge" style="left:98px;top:216px"><span>5</span></div>
<div class="lbl" style="left:35.8px;top:219.6px;letter-spacing:-0.185px;">Excluir</div>
<div class="badge" style="left:98px;top:275px"><span>4</span></div>
<div class="lbl" style="left:18.9px;top:278.5px;letter-spacing:-0.136px;">Cancelar</div>
<div class="badge" style="left:98px;top:346px"><span>3</span></div>
<div class="lbl" style="left:12.0px;top:349.5px;letter-spacing:-0.250px;">Consultar</div>
<div class="badge" style="left:98px;top:415px"><span>2</span></div>
<div class="lbl" style="left:32.5px;top:418.5px;letter-spacing:0.016px;">Alterar</div>
<div class="badge" style="left:98px;top:478px"><span>1</span></div>
<div class="lbl" style="left:38.6px;top:481.9px;letter-spacing:0.020px;">Incluir</div>
<div class="badge" style="left:98px;top:535px"><span>7</span></div>
<div class="lbl" style="left:17.5px;top:538.6px;letter-spacing:0.215px;">Imprimir</div>
<div class="badge" style="left:298px;top:619px"><span>8</span></div>
<div class="lbl" style="left:276.9px;top:655.1px;letter-spacing:-0.154px;">Vincular</div>
<div class="badge" style="left:409px;top:619px"><span>9</span></div>
<div class="lbl" style="left:401.7px;top:655.1px;letter-spacing:0.065px;">Itens</div>
<div class="badge" style="left:510.5px;top:619px"><span>10</span></div>
<div class="lbl" style="left:457.8px;top:655.1px;letter-spacing:0.287px;">Cliente/fornec.</div>
<div class="badge" style="left:708px;top:619px"><span>12</span></div>
<div class="lbl" style="left:660.8px;top:655.1px;letter-spacing:-0.002px;">Pos.financeira</div>
<div class="badge" style="left:113px;top:682px"><span>13</span></div>
<div class="lbl" style="left:71.1px;top:717.6px;letter-spacing:0.106px;">Gerar pedido</div>
<div class="badge" style="left:234px;top:682px"><span>14</span></div>
<div class="lbl" style="left:208.1px;top:717.6px;letter-spacing:-0.133px;">Emitir NF</div>
<div class="badge" style="left:425.5px;top:682px"><span>16</span></div>
<div class="lbl" style="left:381.8px;top:718.1px;letter-spacing:0.138px;">Gerenc.notas</div>
<div class="badge" style="left:606.5px;top:682px"><span>11</span></div>
<div class="lbl" style="left:565.1px;top:718.1px;letter-spacing:-0.109px;">Cons.holding</div>
<div class="badge" style="left:773.5px;top:682px"><span>18</span></div>
<div class="lbl" style="left:757.7px;top:718.1px;letter-spacing:0.071px;">Outros</div>
<div class="badge" style="left:268px;top:759px"><span>15</span></div>
<div class="lbl" style="left:223.9px;top:794.4px;letter-spacing:-0.004px;">Transf.p/Sigla</div>
<div class="badge" style="left:463px;top:752.5px"><span>17</span></div>
<div class="lbl" style="left:445.2px;top:787.6px;letter-spacing:0.284px;">Anexos</div>
</body></html>
